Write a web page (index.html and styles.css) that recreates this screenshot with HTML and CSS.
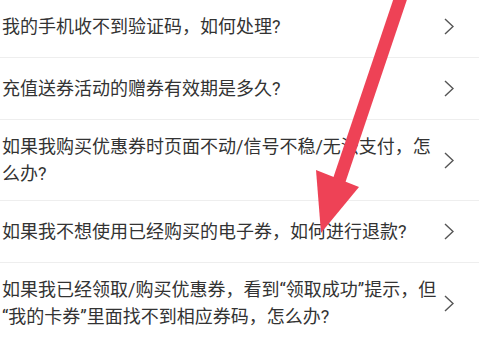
FILE: index.html
```html
<!DOCTYPE html>
<html lang="zh-CN">
<head>
  <meta charset="UTF-8">
  <meta name="viewport" content="width=device-width, initial-scale=1.0">
  <title>常见问题</title>
  <link rel="stylesheet" href="styles.css">
</head>
<body>
  <!-- Список вопросов -->
  <ul class="faq">
    <li class="faq-item">
      <span class="faq-text">我的手机收不到验证码，如何处理?</span>
      <svg class="faq-chevron" width="10" height="17" viewBox="0 0 10 17"><path d="M1 1 L9 8.5 L1 16"/></svg>
    </li>
    <li class="faq-item">
      <span class="faq-text">充值送券活动的赠券有效期是多久?</span>
      <svg class="faq-chevron" width="10" height="17" viewBox="0 0 10 17"><path d="M1 1 L9 8.5 L1 16"/></svg>
    </li>
    <li class="faq-item">
      <span class="faq-text">如果我购买优惠券时页面不动/信号不稳/无法支付，怎么办?</span>
      <svg class="faq-chevron" width="10" height="17" viewBox="0 0 10 17"><path d="M1 1 L9 8.5 L1 16"/></svg>
    </li>
    <li class="faq-item">
      <span class="faq-text">如果我不想使用已经购买的电子券，如何进行退款?</span>
      <svg class="faq-chevron" width="10" height="17" viewBox="0 0 10 17"><path d="M1 1 L9 8.5 L1 16"/></svg>
    </li>
    <li class="faq-item">
      <span class="faq-text">如果我已经领取/购买优惠券，看到“领取成功”提示，但“我的卡券”里面找不到相应券码，怎么办?</span>
      <svg class="faq-chevron" width="10" height="17" viewBox="0 0 10 17"><path d="M1 1 L9 8.5 L1 16"/></svg>
    </li>
  </ul>

  <!-- Красная стрелка поверх списка -->
  <svg class="pointer" width="479" height="339" viewBox="0 0 479 339">
    <line x1="402" y1="-6" x2="339" y2="181" stroke="#ee4256" stroke-width="13"/>
    <polygon points="316,170 359,187 321,233" fill="#ee4256"/>
  </svg>
</body>
</html>
```

FILE: styles.css
```css
body {
  margin: 0;
  background: #fff;
  font-family: Roboto, "Noto Sans CJK SC", sans-serif;
  color: #333;
  overflow: hidden;
}
.faq {
  list-style: none;
  margin: -4px 0 0;
  padding: 0;
}
.faq-item {
  display: flex;
  align-items: center;
  box-sizing: border-box;
  min-height: 62px;
  padding: 13px 0 13px 2px;
  border-bottom: 1px solid #eee;
}
.faq-text {
  flex: 1;
  font-size: 18px;
  line-height: 27px;
}
.faq-chevron {
  flex: none;
  margin: 0 25px 0 4px;
}
.faq-chevron path {
  fill: none;
  stroke: #555;
  stroke-width: 1.4;
}
.pointer {
  position: absolute;
  left: 0;
  top: 0;
  pointer-events: none;
}
```
